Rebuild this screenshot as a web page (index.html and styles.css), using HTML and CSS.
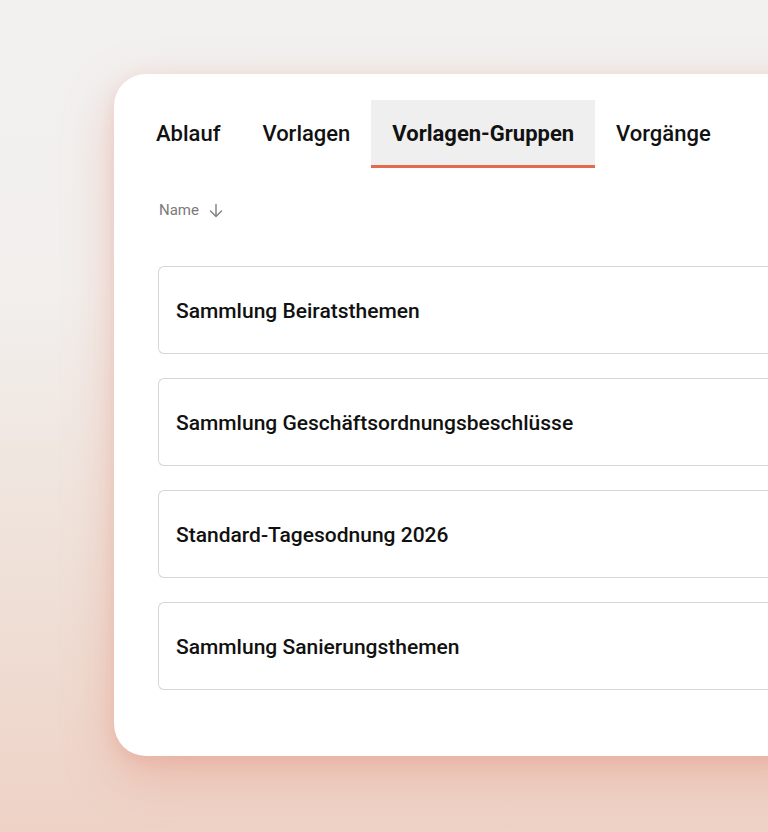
FILE: index.html
```html
<!DOCTYPE html>
<html lang="de">
<head>
<meta charset="utf-8">
<link rel="stylesheet" href="styles.css">
</head>
<body>
<div class="stage">
  <div class="card">
    <nav class="tabs">
      <div class="tab">Ablauf</div>
      <div class="tab">Vorlagen</div>
      <div class="tab active">Vorlagen-Gruppen</div>
      <div class="tab">Vorgänge</div>
    </nav>
    <div class="sort">
      <span>Name</span>
      <svg class="arrow" width="14" height="15" viewBox="0 0 14 15" fill="none" stroke="#858585" stroke-width="1.5" stroke-linecap="round" stroke-linejoin="round"><path d="M7 1.5v12M1.5 8l5.5 5.5L12.5 8"/></svg>
    </div>
    <div class="list">
      <div class="row">Sammlung Beiratsthemen</div>
      <div class="row">Sammlung Geschäftsordnungsbeschlüsse</div>
      <div class="row">Standard-Tagesodnung 2026</div>
      <div class="row">Sammlung Sanierungsthemen</div>
    </div>
  </div>
</div>
</body>
</html>
```

FILE: styles.css
```css
html, body {
  margin: 0;
  padding: 0;
  width: 768px;
  height: 832px;
  overflow: hidden;
}
body {
  font-family: Roboto, "Noto Sans", Arial, sans-serif;
  background: linear-gradient(180deg, #f2f1f0 0%, #f2efed 35%, #efe2da 65%, #eed2c6 100%);
}
.stage {
  padding: 74px 0 0 114px;
}
.card {
  width: 720px;
  height: 682px;
  box-sizing: border-box;
  background: #fff;
  border-radius: 32px;
  padding: 26px 0 0 21px;
  box-shadow: 0 18px 50px rgba(226, 120, 95, 0.35), 0 4px 14px rgba(200, 110, 90, 0.12);
}
.tabs {
  display: flex;
  height: 68px;
}
.tab {
  padding: 2px 21px 0;
  height: 63px;
  display: flex;
  align-items: center;
  font-size: 22px;
  color: #111;
  font-weight: 500;
  border-bottom: 3px solid transparent;
  box-sizing: content-box;
}
.tab.active {
  background: #efefef;
  font-weight: 700;
  border-bottom-color: #e36a4e;
}
.sort {
  display: flex;
  align-items: center;
  gap: 10px;
  margin: 32px 0 0 24px;
  font-size: 15px;
  color: #7a7a7a;
  height: 20px;
}
.arrow {
  margin-top: 1px;
}
.list {
  display: flex;
  flex-direction: column;
  gap: 24px;
  margin: 46px 0 0 23px;
}
.row {
  border: 1px solid #d6d6d6;
  border-right: none;
  border-radius: 6px 0 0 6px;
  display: flex;
  align-items: center;
  padding-left: 17px;
  padding-top: 2px;
  box-sizing: border-box;
  height: 88px;
  font-size: 21px;
  font-weight: 500;
  color: #111;
}
```
